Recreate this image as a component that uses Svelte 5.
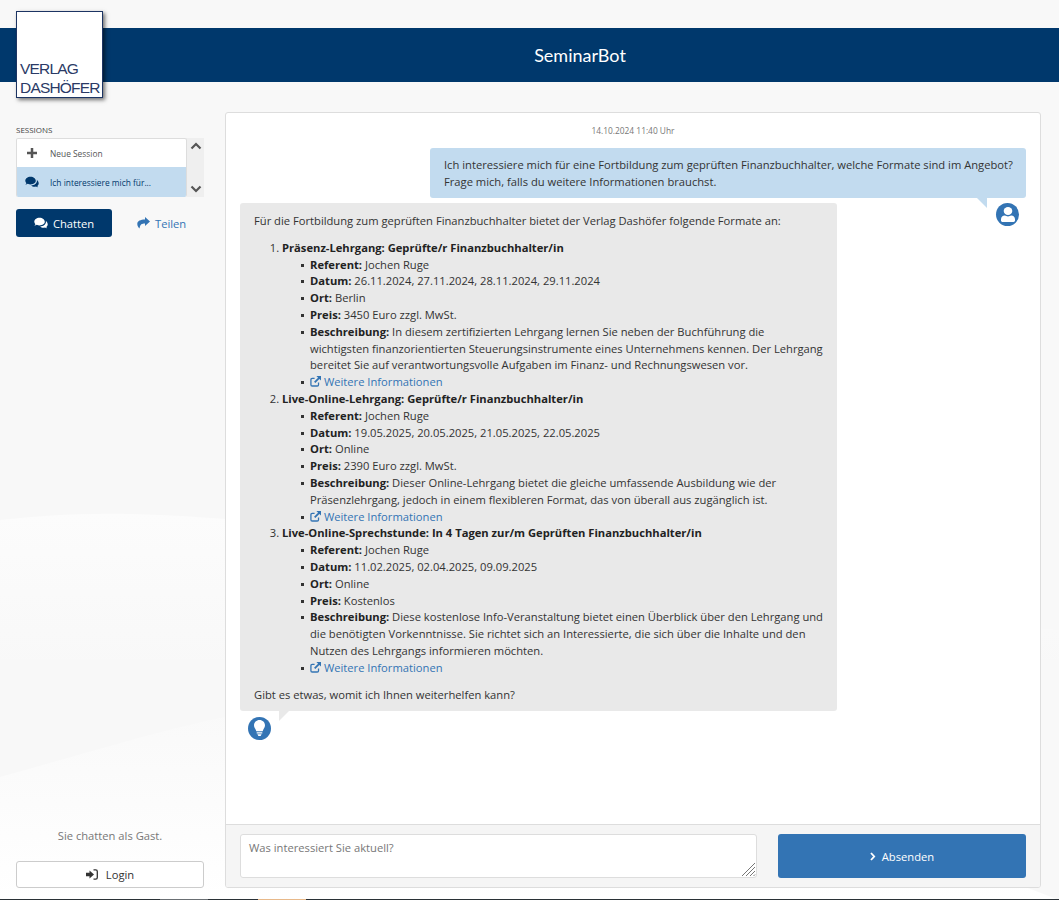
<script lang="ts">
  type Course = {
    title: string;
    referent: string;
    datum: string;
    ort: string;
    preis: string;
    text: string;
  };

  const courses: Course[] = [
    {
      title: 'Präsenz-Lehrgang: Geprüfte/r Finanzbuchhalter/in',
      referent: 'Jochen Ruge',
      datum: '26.11.2024, 27.11.2024, 28.11.2024, 29.11.2024',
      ort: 'Berlin',
      preis: '3450 Euro zzgl. MwSt.',
      text: 'In diesem zertifizierten Lehrgang lernen Sie neben der Buchführung die wichtigsten finanzorientierten Steuerungsinstrumente eines Unternehmens kennen. Der Lehrgang bereitet Sie auf verantwortungsvolle Aufgaben im Finanz- und Rechnungswesen vor.'
    },
    {
      title: 'Live-Online-Lehrgang: Geprüfte/r Finanzbuchhalter/in',
      referent: 'Jochen Ruge',
      datum: '19.05.2025, 20.05.2025, 21.05.2025, 22.05.2025',
      ort: 'Online',
      preis: '2390 Euro zzgl. MwSt.',
      text: 'Dieser Online-Lehrgang bietet die gleiche umfassende Ausbildung wie der Präsenzlehrgang, jedoch in einem flexibleren Format, das von überall aus zugänglich ist.'
    },
    {
      title: 'Live-Online-Sprechstunde: In 4 Tagen zur/m Geprüften Finanzbuchhalter/in',
      referent: 'Jochen Ruge',
      datum: '11.02.2025, 02.04.2025, 09.09.2025',
      ort: 'Online',
      preis: 'Kostenlos',
      text: 'Diese kostenlose Info-Veranstaltung bietet einen Überblick über den Lehrgang und die benötigten Vorkenntnisse. Sie richtet sich an Interessierte, die sich über die Inhalte und den Nutzen des Lehrgangs informieren möchten.'
    }
  ];
</script>

{#snippet comments(size: number)}
  <svg width={size} height={size} viewBox="0 0 24 24" fill="currentColor" aria-hidden="true">
    <path d="M9.500 3C4.300 3 .5 6 .5 9.800c0 1.600.7 3.100 1.900 4.300-.4 1-1.100 1.800-1.800 2.500 1.600-.1 3.100-.6 4.300-1.500 1.300.6 2.900 1 4.600 1 5 0 9-3 9-6.300C18.500 6 14.500 3 9.500 3z" />
    <path d="M20.300 8.800c.1.400.2.800.2 1.200 0 4.500-4.500 8-10 8.100 1.400 1.300 3.400 2.100 5.600 2.100 1 0 1.900-.2 2.700-.4 1.100.8 2.400 1.300 3.800 1.400-.7-.7-1.200-1.500-1.500-2.400 1.500-1 2.400-2.500 2.400-4.100 0-2.500-1.100-4.300-3.200-6.400z" />
  </svg>
{/snippet}

<div class="page">
  <svg class="wave" viewBox="0 0 1059 400" width="1059" height="400" aria-hidden="true">
    <defs>
      <linearGradient id="fade-top" x1="0" y1="0" x2="0" y2="1">
        <stop offset="0" stop-color="#fcfcfc" />
        <stop offset="1" stop-color="#fcfcfc" stop-opacity="0" />
      </linearGradient>
      <linearGradient id="fade-bottom" x1="0" y1="0" x2="0" y2="1">
        <stop offset="0" stop-color="#f9f9f9" />
        <stop offset="1" stop-color="#fff" />
      </linearGradient>
    </defs>
    <path d="M0 20C60 14 110 10 225 19 500 40 800 110 1059 130V170H0z" fill="url(#fade-top)" />
    <path d="M0 277C80 255 160 230 225 217 450 170 800 300 1059 400H0z" fill="url(#fade-bottom)" />
  </svg>

  <header class="topbar">
    <div class="logo">
      <span>VERLAG</span>
      <span>DASHÖFER</span>
    </div>
    <h1>SeminarBot</h1>
  </header>

  <div class="body">
    <aside class="sidebar">
      <div class="sessions-block">
        <div class="sessions-label">SESSIONS</div>
        <div class="sessions">
          <div class="session-list">
            <div class="session">
              <span class="session-icon plus">
                <svg width="10" height="10" viewBox="0 0 12 12" aria-hidden="true">
                  <path d="M4.500 0h3v4.500H12v3H7.500V12h-3V7.500H0v-3h4.500z" fill="currentColor" />
                </svg>
              </span>
              <span>Neue Session</span>
            </div>
            <div class="session active">
              <span class="session-icon">{@render comments(14)}</span>
              <span>Ich interessiere mich für...</span>
            </div>
          </div>
          <div class="scroller">
            <svg width="12" height="8" viewBox="0 0 12 8" aria-hidden="true"><path d="M1.500 6.500 6 2l4.500 4.500" fill="none" stroke="currentColor" stroke-width="2.200" /></svg>
            <svg width="12" height="8" viewBox="0 0 12 8" aria-hidden="true"><path d="M1.500 1.500 6 6l4.500-4.500" fill="none" stroke="currentColor" stroke-width="2.200" /></svg>
          </div>
        </div>
      </div>

      <div class="tabs">
        <button type="button" class="tab-chat">{@render comments(14)} Chatten</button>
        <button type="button" class="tab-share">
          <svg width="13" height="12" viewBox="0 0 13 12" aria-hidden="true">
            <path d="M8 0l5 4.500L8 9V6.400C5 6.400 3 7 2.600 11.500 1 10 .3 8.500.3 7 .3 4 3.500 2.700 8 2.600z" fill="currentColor" />
          </svg>
          Teilen
        </button>
      </div>

      <div class="guest">
        <p>Sie chatten als Gast.</p>
        <button type="button" class="login">
          <svg width="12" height="11" viewBox="0 0 12 11" aria-hidden="true">
            <path d="M0 3.800h3.500V1.500L8 5.500l-4.500 4V7.200H0z" fill="currentColor" />
            <path d="M7.500 .8h2.200c1 0 1.600.7 1.600 1.600v6.200c0 .9-.6 1.600-1.600 1.600H7.500" fill="none" stroke="currentColor" stroke-width="1.300" />
          </svg>
          Login
        </button>
      </div>
    </aside>

    <main class="chat">
      <div class="messages">
        <div class="stamp">14.10.2024 11:40 Uhr</div>

        <div class="user-row">
          <div class="bubble user">
            Ich interessiere mich für eine Fortbildung zum geprüften Finanzbuchhalter, welche Formate sind im Angebot? Frage mich, falls du weitere Informationen brauchst.
          </div>
          <div class="avatar user-avatar">
            <svg width="14" height="15" viewBox="0 0 14 15" aria-hidden="true">
              <ellipse cx="7" cy="4" rx="4.300" ry="4" fill="#fff" />
              <path d="M1.400 15C.6 15 0 14.400 0 13.600v-1.300C0 10.300 1.700 8.600 3.800 8.600c.9.500 2 .8 3.200.8s2.300-.3 3.200-.8c2.100 0 3.800 1.700 3.800 3.700v1.300c0 .8-.6 1.400-1.400 1.400z" fill="#fff" />
            </svg>
          </div>
        </div>

        <div class="bubble bot">
          <p>Für die Fortbildung zum geprüften Finanzbuchhalter bietet der Verlag Dashöfer folgende Formate an:</p>
          <ol>
            {#each courses as course}
              <li>
                <strong>{course.title}</strong>
                <ul>
                  <li><strong>Referent:</strong> {course.referent}</li>
                  <li><strong>Datum:</strong> {course.datum}</li>
                  <li><strong>Ort:</strong> {course.ort}</li>
                  <li><strong>Preis:</strong> {course.preis}</li>
                  <li><strong>Beschreibung:</strong> {course.text}</li>
                  <li>
                    <a href="#top">
                      <svg width="11" height="11" viewBox="0 0 12 12" aria-hidden="true">
                        <path d="M9.300 7v2.500c0 .8-.6 1.400-1.400 1.400H2.400c-.8 0-1.400-.6-1.400-1.400V4c0-.8.6-1.400 1.400-1.400H5" fill="none" stroke="currentColor" stroke-width="1.400" />
                        <path d="M7 0h5v5l-1.800-1.800L5.800 7.600 4.400 6.200l4.400-4.400z" fill="currentColor" />
                      </svg>
                      Weitere Informationen
                    </a>
                  </li>
                </ul>
              </li>
            {/each}
          </ol>
          <p>Gibt es etwas, womit ich Ihnen weiterhelfen kann?</p>
        </div>

        <div class="avatar bot-avatar">
          <svg width="11" height="16" viewBox="0 0 11 16" aria-hidden="true">
            <path d="M5.500 0C2.400 0 0 2.300 0 5.200c0 2.500 1.800 3.700 2.300 6h6.400c.5-2.300 2.300-3.500 2.300-6C11 2.300 8.600 0 5.500 0z" fill="#fff" />
            <path d="M2.700 12.200h5.600v1.400H2.700zM3.400 14.300h4.200L6.600 16H4.400z" fill="#fff" />
          </svg>
        </div>
      </div>

      <form class="composer" onsubmit={(e) => e.preventDefault()}>
        <div class="input-wrap">
          <textarea placeholder="Was interessiert Sie aktuell?"></textarea>
          <svg class="grip" width="15" height="15" viewBox="0 0 15 15" aria-hidden="true">
            <path d="M1 14 14 1M5 14 14 5M9 14l5-5M12.500 14l1.500-1.500" stroke="#777" stroke-width="1" fill="none" />
          </svg>
        </div>
        <button type="submit">
          <svg width="6" height="9" viewBox="0 0 6 9" aria-hidden="true"><path d="M1 1l3.200 3.500L1 8" fill="none" stroke="currentColor" stroke-width="1.800" /></svg>
          Absenden
        </button>
      </form>
    </main>
  </div>

  <div class="footer-strip">
    <span class="seg-grey"></span>
    <span class="seg-orange"></span>
  </div>
</div>

<style>
  :global(body) {
    margin: 0;
    background: #f8f8f8;
    color: #333;
    font-family: 'Open Sans', 'Noto Sans', sans-serif;
    font-size: 11.200px;
  }

  .page {
    position: relative;
    height: 900px;
    overflow: hidden;
    padding-top: 28px;
    box-sizing: border-box;
    background: #f8f8f8;
  }

  .wave {
    position: absolute;
    left: 0;
    top: 500px;
  }

  .topbar {
    position: relative;
    height: 54px;
    padding-left: 101px;
    background: #00386c;
    display: flex;
    align-items: center;
    justify-content: center;
  }

  h1 {
    margin: 0;
    color: #fff;
    font-family: Lato, 'Open Sans', sans-serif;
    font-size: 18px;
    font-weight: 400;
  }

  .logo {
    position: absolute;
    left: 16px;
    top: -17px;
    width: 87px;
    height: 87px;
    box-sizing: border-box;
    border: 1px solid #1c3463;
    background: #fff;
    box-shadow: 2px 2px 4px rgba(0, 0, 0, 0.55);
    display: flex;
    flex-direction: column;
    justify-content: flex-end;
    padding: 0 0 0 3px;
    color: #2b3a66;
    font-family: 'Liberation Sans', Arial, sans-serif;
    font-size: 15.500px;
    line-height: 19px;
    letter-spacing: -0.8px;
  }

  .body {
    position: relative;
    display: flex;
    height: 790px;
    margin-top: 30px;
    padding: 0 18px 0 16px;
    box-sizing: border-box;
  }

  .sidebar {
    width: 188px;
    margin-right: 21px;
    display: flex;
    flex-direction: column;
    padding-top: 12px;
  }

  .sessions-label {
    color: #444;
    font-size: 8px;
    line-height: 11px;
    margin-bottom: 3px;
  }

  .sessions {
    display: flex;
  }

  .session-list {
    width: 171px;
    box-sizing: border-box;
    border: 1px solid #ddd;
    border-bottom: 0;
    border-radius: 2px;
    overflow: hidden;
    background: #fff;
  }

  .session {
    height: 28px;
    display: flex;
    align-items: center;
    gap: 10px;
    color: #555;
    font-size: 8.400px;
  }

  .session.active {
    background: #c2dbef;
    color: #00386c;
    height: 30px;
  }

  .session-icon {
    display: inline-flex;
    width: 16px;
    margin-left: 7px;
    justify-content: center;
    color: #00386c;
  }

  .session-icon.plus {
    color: #555;
  }

  .scroller {
    width: 17px;
    background: #efefef;
    display: flex;
    flex-direction: column;
    justify-content: space-between;
    align-items: center;
    padding: 4px 0;
    box-sizing: border-box;
    color: #555;
  }

  .tabs {
    display: flex;
    margin-top: 12px;
    gap: 25px;
  }

  button {
    font-family: inherit;
    cursor: pointer;
  }

  .tab-chat,
  .tab-share {
    height: 28px;
    border-radius: 3px;
    font-size: 11.200px;
    display: inline-flex;
    align-items: center;
    gap: 5px;
    border: 0;
  }

  .tab-chat {
    width: 96px;
    justify-content: center;
    background: #00386c;
    color: #fff;
  }

  .tab-share {
    background: transparent;
    color: #3374b4;
    padding: 0;
  }

  .guest {
    margin-top: auto;
    padding-bottom: 14px;
    text-align: center;
  }

  .guest p {
    margin: 0 0 18px;
    color: #777;
    font-size: 11.200px;
    line-height: 15px;
  }

  .login {
    width: 100%;
    height: 27px;
    background: #fff;
    border: 1px solid #ccc;
    border-radius: 3px;
    color: #333;
    font-size: 11.200px;
    display: inline-flex;
    align-items: center;
    justify-content: center;
    gap: 8px;
  }

  .chat {
    flex: 1;
    display: flex;
    flex-direction: column;
    border: 1px solid #ddd;
    border-radius: 3px;
    background: rgba(255, 255, 255, 0.9);
    min-width: 0;
    height: 776px;
    box-sizing: border-box;
    overflow: hidden;
  }

  .messages {
    flex: 1;
    padding: 12px 14px 0;
    min-height: 0;
  }

  .stamp {
    text-align: center;
    color: #777;
    font-size: 8.400px;
    line-height: 11px;
    margin-bottom: 12px;
  }

  .user-row {
    display: flex;
    flex-direction: column;
    align-items: flex-end;
    position: relative;
  }

  .bubble {
    font-size: 11.200px;
    line-height: 16.800px;
    border-radius: 3px;
    box-sizing: border-box;
    position: relative;
  }

  .bubble.user {
    width: 596px;
    background: #c2dbef;
    color: #333;
    padding: 9px 8px 7px 14px;
  }

  .bubble.user::after {
    content: '';
    position: absolute;
    right: 39px;
    bottom: -10px;
    border-left: 10px solid transparent;
    border-top: 10px solid #c2dbef;
  }

  .avatar {
    width: 23px;
    height: 23px;
    border-radius: 50%;
    background: #3374b4;
    display: flex;
    align-items: center;
    justify-content: center;
  }

  .user-avatar {
    position: absolute;
    right: 7px;
    top: 55px;
  }

  .bubble.bot {
    width: 597px;
    background: #e9e9e9;
    color: #333;
    padding: 10px 14px 7px;
    margin-top: 5px;
  }

  .bubble.bot::after {
    content: '';
    position: absolute;
    left: 39px;
    bottom: -10px;
    border-right: 10px solid transparent;
    border-top: 10px solid #e9e9e9;
  }

  .bot-avatar {
    margin: 6px 0 0 8px;
  }

  .bubble p {
    margin: 0 0 10.500px;
  }

  .bubble p:last-child {
    margin: 0;
  }

  ol {
    margin: 0 0 10.500px;
    padding: 0 0 0 28px;
  }

  ul {
    margin: 0;
    padding: 0 0 0 28px;
    list-style: none;
  }

  ul li {
    position: relative;
  }

  ul li::before {
    content: '';
    position: absolute;
    left: -9px;
    top: 7px;
    width: 3px;
    height: 3px;
    background: #333;
  }

  strong {
    font-weight: 700;
    color: #222;
  }

  a {
    color: #3374b4;
    text-decoration: none;
  }

  a svg {
    vertical-align: -1px;
  }

  .composer {
    height: 63px;
    flex: none;
    border-top: 1px solid #ddd;
    background: #f5f5f5;
    box-sizing: border-box;
    padding: 9px 14px;
    display: flex;
    gap: 21px;
  }

  .input-wrap {
    position: relative;
    width: 517px;
    height: 44px;
  }

  textarea {
    display: block;
    width: 100%;
    height: 44px;
    box-sizing: border-box;
    border: 1px solid #ddd;
    border-radius: 3px;
    padding: 5px 8px;
    font-family: inherit;
    font-size: 11.200px;
    background: #fff;
    color: #333;
    resize: none;
  }

  textarea::placeholder {
    color: #777;
  }

  .grip {
    position: absolute;
    right: 1px;
    bottom: 1px;
    pointer-events: none;
  }

  .composer button {
    flex: 1;
    height: 44px;
    border: 0;
    border-radius: 3px;
    background: #3374b4;
    color: #fff;
    font-size: 11.200px;
    display: inline-flex;
    align-items: center;
    justify-content: center;
    gap: 6px;
  }

  .footer-strip {
    position: absolute;
    left: 0;
    right: 0;
    bottom: 0;
    height: 1px;
    background: #2a3136;
  }

  .footer-strip span {
    position: absolute;
    bottom: 0;
    height: 1px;
  }

  .seg-grey {
    left: 160px;
    width: 48px;
    background: #6a6f73;
  }

  .seg-orange {
    left: 258px;
    width: 48px;
    background: #e8b98a;
  }
</style>
